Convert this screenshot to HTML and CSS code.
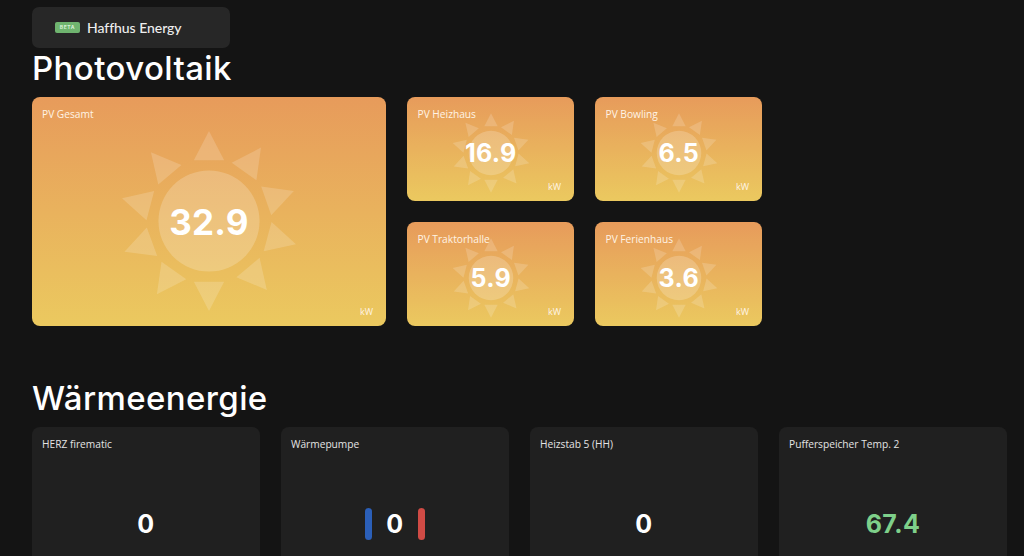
FILE: index.html
```html
<!DOCTYPE html>
<html lang="de">
<head>
    <meta charset="UTF-8">
    <meta name="viewport" content="width=device-width, initial-scale=1.0">
    <title>Haffhus Energy</title>
    <link rel="stylesheet" href="styles.css">
</head>
<body>
    <svg class="defs" width="0" height="0" aria-hidden="true">
        <defs>
            <symbol id="sun" viewBox="-92 -92 184 184">
                <circle r="50" fill="#fff" fill-opacity="0.2"></circle>
                <g fill="#fff" fill-opacity="0.17">
                    <polygon id="ray" points="0,-89 15,-60 -15,-60"></polygon>
                    <use href="#ray" transform="rotate(35.3)"></use>
                    <use href="#ray" transform="rotate(70.6)"></use>
                    <use href="#ray" transform="rotate(104.9)"></use>
                    <use href="#ray" transform="rotate(140)"></use>
                    <use href="#ray" transform="rotate(180)"></use>
                    <use href="#ray" transform="rotate(215.4)"></use>
                    <use href="#ray" transform="rotate(250)"></use>
                    <use href="#ray" transform="rotate(284.7)"></use>
                    <use href="#ray" transform="rotate(319.8)"></use>
                </g>
            </symbol>
        </defs>
    </svg>

    <div class="brand">
        <span class="beta">BETA</span>
        <span class="brand-name">Haffhus Energy</span>
    </div>

    <h1>Photovoltaik</h1>
    <section class="pv-grid">
        <div class="pv-card pv-large">
            <div class="label">PV Gesamt</div>
            <svg class="sun"><use href="#sun"></use></svg>
            <div class="value">32.9</div>
            <div class="unit">kW</div>
        </div>
        <div class="pv-card">
            <div class="label">PV Heizhaus</div>
            <svg class="sun"><use href="#sun"></use></svg>
            <div class="value">16.9</div>
            <div class="unit">kW</div>
        </div>
        <div class="pv-card">
            <div class="label">PV Bowling</div>
            <svg class="sun"><use href="#sun"></use></svg>
            <div class="value">6.5</div>
            <div class="unit">kW</div>
        </div>
        <div class="pv-card">
            <div class="label">PV Traktorhalle</div>
            <svg class="sun"><use href="#sun"></use></svg>
            <div class="value">5.9</div>
            <div class="unit">kW</div>
        </div>
        <div class="pv-card">
            <div class="label">PV Ferienhaus</div>
            <svg class="sun"><use href="#sun"></use></svg>
            <div class="value">3.6</div>
            <div class="unit">kW</div>
        </div>
    </section>

    <h1 class="heat-title">Wärmeenergie</h1>
    <section class="heat-grid">
        <div class="heat-card">
            <div class="label">HERZ firematic</div>
            <div class="heat-value">0</div>
        </div>
        <div class="heat-card">
            <div class="label">Wärmepumpe</div>
            <div class="heat-value">
                <span class="bar bar-blue"></span>
                0
                <span class="bar bar-red"></span>
            </div>
        </div>
        <div class="heat-card">
            <div class="label">Heizstab 5 (HH)</div>
            <div class="heat-value">0</div>
        </div>
        <div class="heat-card">
            <div class="label">Pufferspeicher Temp. 2</div>
            <div class="heat-value green">67.4</div>
        </div>
    </section>
</body>
</html>
```

FILE: styles.css
```css
html, body {
    height: 100%;
    overflow: hidden;
}
body {
    margin: 0;
    padding: 7px 18px 0 32px;
    box-sizing: border-box;
    background: #141414;
    color: #fff;
    font-family: "Open Sans", sans-serif;
}
.defs {
    position: absolute;
}
.brand {
    display: flex;
    align-items: center;
    gap: 7px;
    width: 198px;
    height: 41px;
    padding-left: 23px;
    box-sizing: border-box;
    background: #272727;
    border-radius: 7px;
}
.beta {
    width: 25px;
    height: 11px;
    background: #6fb46f;
    border-radius: 2px;
    color: #d8f0d8;
    font-family: "Inter", sans-serif;
    font-size: 5px;
    font-weight: 700;
    line-height: 11px;
    text-align: center;
    letter-spacing: 0.6px;
}
.brand-name {
    font-family: "Lato", sans-serif;
    font-size: 14px;
    font-weight: 500;
    letter-spacing: -0.05px;
    color: #eee;
}
h1 {
    margin: 1px 0 0;
    font-family: "Inter", sans-serif;
    font-size: 33px;
    font-weight: 500;
    line-height: 38px;
    letter-spacing: 0.4px;
}
.pv-grid {
    display: grid;
    grid-template-columns: 354px 167px 167px;
    grid-template-rows: 104px 104px;
    column-gap: 21px;
    row-gap: 21px;
    margin-top: 10px;
}
.pv-card {
    position: relative;
    display: flex;
    flex-direction: column;
    padding: 10px 10px 8px 10.5px;
    box-sizing: border-box;
    background: linear-gradient(to bottom, #e79b5b, #ebc95f);
    border-radius: 8px;
}
.pv-large {
    grid-row: span 2;
    padding-left: 10px;
}
.label {
    font-size: 10.2px;
    line-height: 14px;
    color: #e4e4e4;
}
.pv-card .label {
    position: relative;
    color: #fff4e6;
}
.sun {
    position: absolute;
    left: 50%;
    top: 56px;
    width: 82px;
    height: 82px;
    margin: -41px 0 0 -41px;
}
.pv-large .sun {
    top: 124px;
    width: 186px;
    height: 186px;
    margin: -93px 0 0 -93px;
}
.value {
    position: relative;
    flex: 1;
    display: flex;
    align-items: center;
    justify-content: center;
    padding-top: 4px;
    font-family: "Inter", sans-serif;
    font-size: 25px;
    font-weight: 700;
    letter-spacing: 0.3px;
}
.pv-large .value {
    padding-top: 16px;
    font-size: 35px;
    letter-spacing: 0.2px;
}
.unit {
    position: relative;
    align-self: flex-end;
    padding-right: 3px;
    font-size: 9px;
    line-height: 12px;
    color: #fff4e6;
}
.heat-title {
    margin-top: 53px;
}
.heat-grid {
    display: grid;
    grid-template-columns: repeat(4, 228px);
    column-gap: 21px;
    margin-top: 10px;
}
.heat-card {
    height: 229px;
    padding: 10px;
    box-sizing: border-box;
    background: #202020;
    border-radius: 8px;
}
.heat-value {
    display: flex;
    align-items: center;
    justify-content: center;
    gap: 14px;
    margin-top: 57px;
    height: 32px;
    font-family: "Inter", sans-serif;
    font-size: 25px;
    font-weight: 700;
    letter-spacing: 0.4px;
}
.green {
    color: #7ed08a;
}
.bar {
    width: 7px;
    height: 32px;
    border-radius: 4px;
}
.bar-blue {
    background: #2b5fb8;
}
.bar-red {
    background: #d04b45;
}
```
